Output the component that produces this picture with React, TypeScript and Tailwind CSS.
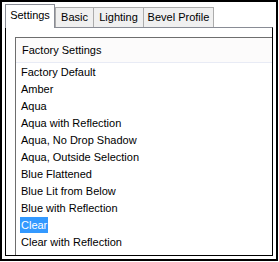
const tabs = [
    { label: 'Settings', w: 'w-[50px]', active: true },
    { label: 'Basic', w: 'w-[39px]', active: false },
    { label: 'Lighting', w: 'w-[51px]', active: false },
    { label: 'Bevel Profile', w: 'w-[71px]', active: false },
];

const presets = [
    'Factory Default',
    'Amber',
    'Aqua',
    'Aqua with Reflection',
    'Aqua, No Drop Shadow',
    'Aqua, Outside Selection',
    'Blue Flattened',
    'Blue Lit from Below',
    'Blue with Reflection',
    'Clear',
    'Clear with Reflection',
    'Clear, No Drop Shadow',
];

export default function App() {
    const selected = 'Clear';

    return (
        <div className="w-[279px] h-[262px] bg-white text-[11px] text-black font-['Liberation_Sans',Arial,sans-serif]">
            <div className="w-[278px] h-[261px] border-2 border-black pt-[2px] pl-[3px] pr-[3px] pb-[3px] flex flex-col">
                {/* Tab strip */}
                <div className="flex items-end h-[23px] relative z-10">
                    {tabs.map((t, i) =>
                        t.active ? (
                            <div
                                key={t.label}
                                className={`${t.w} h-[24px] -mb-px bg-white border border-b-0 border-[#898c95] flex items-center justify-center pb-[3px]`}
                            >
                                {t.label}
                            </div>
                        ) : (
                            <div
                                key={t.label}
                                className={`${t.w} h-[20px] ${i > 1 ? '-ml-px' : ''} bg-[#f0f0f0] border border-b-0 border-[#acacac] flex items-center justify-center`}
                            >
                                {t.label}
                            </div>
                        )
                    )}
                </div>

                {/* Tab panel */}
                <div className="flex-1 border border-black border-t-[#898c95] bg-white overflow-hidden">
                    <div className="ml-[9px] mt-[9px] w-[300px] border-l border-t border-[#6e6e6e]">
                        <div className="h-[25px] pl-[6px] flex items-center bg-[#fcfbfb] border-b border-[#e8ebf5]">
                            Factory Settings
                        </div>
                        {presets.map((p) => (
                            <div key={p} className="h-[17px] pl-[4px] flex items-end">
                                <span
                                    className={`px-px h-[16px] leading-[16px] ${p === selected ? 'bg-[#3399ff] text-white' : ''}`}
                                >
                                    {p}
                                </span>
                            </div>
                        ))}
                    </div>
                </div>
            </div>
        </div>
    );
}
